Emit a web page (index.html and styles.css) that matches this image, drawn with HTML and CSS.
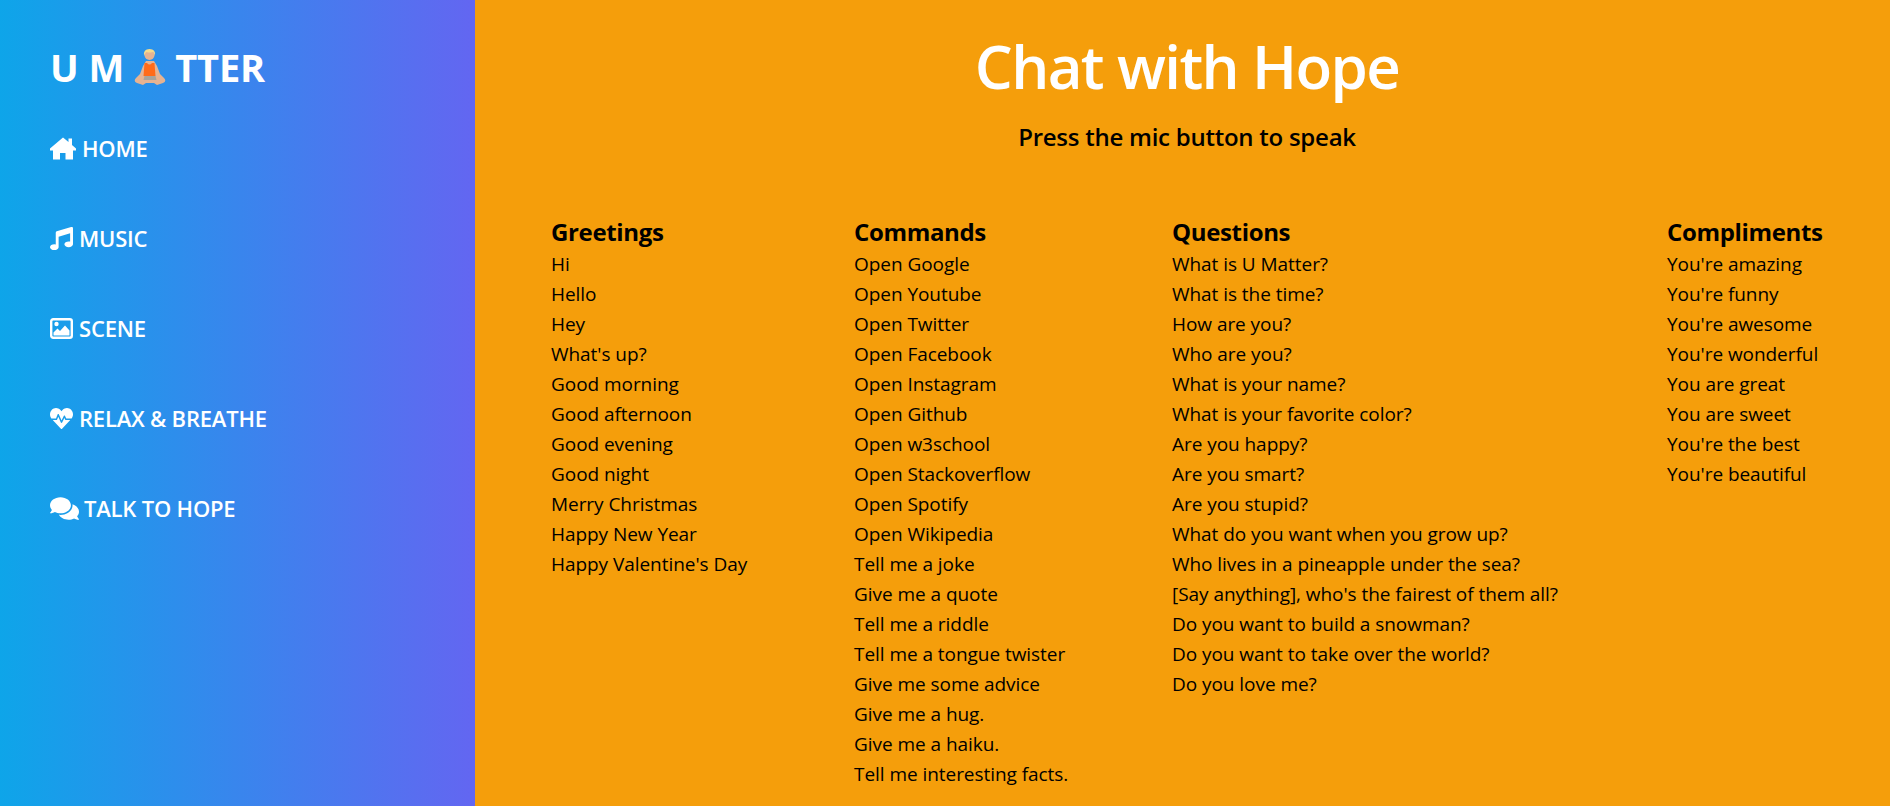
FILE: index.html
```html
<!DOCTYPE html>
<html lang="en">
<head>
  <meta charset="UTF-8" />
  <meta name="viewport" content="width=device-width, initial-scale=1.0"/>
  <title>U Matter - Chat with Hope</title>
  <link rel="stylesheet" href="styles.css">
</head>
<body>

  <div class="page">
    <aside class="sidebar">
      <h1 class="logo">U M<svg class="logo-emoji" viewBox="0 0 32 37"><path fill="#e6b392" d="M12 12h8l3 5 3 8 4 4q3 3-1 5l-6 2-3-2h-8l-3 2-6-2q-4-2-1-5l4-4 3-8z"/><path fill="#ff6b1a" d="M10.500 14h2.500q2.500 3 5 0h2.500l1 13h-12z"/><path fill="#a9a39b" d="M10.500 27h11l1 4h-13z"/><circle cx="15.500" cy="6" r="5" fill="#e6b392"/><path fill="#f5dc8c" d="M10 7q-1-7 5.500-7t5.500 7q-1-4-2.500-4-3 1-6 0-1.500 1-2.500 4z"/></svg>TTER</h1>
      <nav class="nav">
        <a class="nav-link" href="#"><svg class="icon icon-home" viewBox="0 0 26 22"><path d="M13 0l5.500 4.600V1h3.500v6.500l4 3.500v2h-3v9h-7.500v-6.500h-5.500V22H3v-9H0v-2z"/></svg>HOME</a>
        <a class="nav-link" href="#"><svg class="icon" viewBox="0 0 512 512"><path d="M470.38 1.51L150.41 96A32 32 0 0 0 128 126.51v261.41A139 139 0 0 0 96 384c-53 0-96 28.66-96 64s43 64 96 64 96-28.66 96-64V214.32l256-75v184.61a138.4 138.4 0 0 0-32-3.93c-53 0-96 28.66-96 64s43 64 96 64 96-28.65 96-64V32a32 32 0 0 0-41.62-30.49z"/></svg>MUSIC</a>
        <a class="nav-link" href="#"><svg class="icon icon-scene" viewBox="0 0 23 21"><rect class="scene-frame" x="1.200" y="1.200" width="20.600" height="18.600" rx="2"/><circle cx="6.500" cy="6" r="2.200"/><path d="M3.500 17.500v-3l4-4 2.500 2.500 5-5.500 4.500 5v5z"/></svg>SCENE</a>
        <a class="nav-link" href="#"><svg class="icon icon-scene" viewBox="0 32 512 448" preserveAspectRatio="none"><path d="M320.2 243.8l-49.7 99.4c-6 12.1-23.4 11.7-28.9-.6l-56.9-126.3-30 71.7H60.6l182.5 186.5c7.1 7.3 18.600 7.3 25.700 0L451.400 288H342.300l-22.100-44.200zM473.700 73.900l-2.400-2.500c-51.500-52.600-135.800-52.600-187.400 0L256 100l-27.900-28.500c-51.500-52.700-135.900-52.700-187.400 0l-2.400 2.400C-10.400 123.700-12.500 203 31 256h102.400l35.900-86.200c5.400-12.900 23.600-13.200 29.400-.4l58.200 129.300 49-97.900c5.900-11.800 22.700-11.800 28.600 0l27.600 55.200H481c43.500-53 41.400-132.300-7.300-182.100z"/></svg>RELAX &amp; BREATHE</a>
        <a class="nav-link" href="#"><svg class="icon icon-talk" viewBox="0 32 576 448"><path d="M416 192c0-88.400-93.100-160-208-160S0 103.600 0 192c0 34.300 14.100 65.900 38 92-13.400 30.200-35.500 54.200-35.800 54.500-2.200 2.300-2.800 5.700-1.500 8.700S4.800 352 8 352c36.600 0 66.900-12.300 88.700-25 32.200 15.700 70.300 25 111.300 25 114.900 0 208-71.600 208-160zm122 220c23.900-26 38-57.700 38-92 0-66.900-53.500-124.200-129.300-148.100.9 6.600 1.300 13.300 1.300 20.100 0 105.900-107.700 192-240 192-10.800 0-21.300-.8-31.700-1.900C207.800 439.600 281.800 480 368 480c41 0 79.100-9.200 111.300-25 21.800 12.700 52.100 25 88.700 25 3.200 0 6.100-1.900 7.300-4.800 1.300-2.900.7-6.300-1.500-8.700-.3-.3-22.400-24.200-35.800-54.500z"/></svg>TALK TO HOPE</a>
      </nav>
    </aside>

    <main class="main">
      <h2 class="title">Chat with Hope</h2>
      <p class="subtitle">Press the mic button to speak</p>

      <div class="columns">
        <section>
          <h3>Greetings</h3>
          <ul>
            <li>Hi</li>
            <li>Hello</li>
            <li>Hey</li>
            <li>What's up?</li>
            <li>Good morning</li>
            <li>Good afternoon</li>
            <li>Good evening</li>
            <li>Good night</li>
            <li>Merry Christmas</li>
            <li>Happy New Year</li>
            <li>Happy Valentine's Day</li>
          </ul>
        </section>
        <section>
          <h3>Commands</h3>
          <ul>
            <li>Open Google</li>
            <li>Open Youtube</li>
            <li>Open Twitter</li>
            <li>Open Facebook</li>
            <li>Open Instagram</li>
            <li>Open Github</li>
            <li>Open w3school</li>
            <li>Open Stackoverflow</li>
            <li>Open Spotify</li>
            <li>Open Wikipedia</li>
            <li>Tell me a joke</li>
            <li>Give me a quote</li>
            <li>Tell me a riddle</li>
            <li>Tell me a tongue twister</li>
            <li>Give me some advice</li>
            <li>Give me a hug.</li>
            <li>Give me a haiku.</li>
            <li>Tell me interesting facts.</li>
          </ul>
        </section>
        <section>
          <h3>Questions</h3>
          <ul>
            <li>What is U Matter?</li>
            <li>What is the time?</li>
            <li>How are you?</li>
            <li>Who are you?</li>
            <li>What is your name?</li>
            <li>What is your favorite color?</li>
            <li>Are you happy?</li>
            <li>Are you smart?</li>
            <li>Are you stupid?</li>
            <li>What do you want when you grow up?</li>
            <li>Who lives in a pineapple under the sea?</li>
            <li>[Say anything], who's the fairest of them all?</li>
            <li>Do you want to build a snowman?</li>
            <li>Do you want to take over the world?</li>
            <li>Do you love me?</li>
          </ul>
        </section>
        <section>
          <h3>Compliments</h3>
          <ul>
            <li>You're amazing</li>
            <li>You're funny</li>
            <li>You're awesome</li>
            <li>You're wonderful</li>
            <li>You are great</li>
            <li>You are sweet</li>
            <li>You're the best</li>
            <li>You're beautiful</li>
          </ul>
        </section>
      </div>
    </main>
  </div>

</body>
</html>
```

FILE: styles.css
```css
body {
  margin: 0;
  font-family: "Open Sans", "Noto Sans", sans-serif;
  background-color: #f59e0b;
  color: #000;
}

.page {
  display: flex;
  min-height: 806px;
}

.sidebar {
  width: 475px;
  box-sizing: border-box;
  padding: 42px 50px;
  background: linear-gradient(to right, #0ea5e9, #6366f1);
  color: #fff;
}

.logo {
  margin: 0;
  font-size: 38px;
  line-height: 50px;
  font-weight: 700;
  letter-spacing: -0.1px;
  display: flex;
  align-items: center;
}

.logo-emoji {
  width: 32px;
  height: 37px;
  margin: 0 9px 0 10px;
}

.nav {
  margin-top: 41px;
  display: flex;
  flex-direction: column;
  gap: 60px;
}

.nav-link {
  display: flex;
  align-items: center;
  gap: 6px;
  height: 30px;
  color: #fff;
  font-size: 22px;
  font-weight: 600;
  text-decoration: none;
  letter-spacing: -0.2px;
}

.icon {
  width: 23px;
  height: 23px;
  fill: #fff;
  flex: none;
}

.icon-home {
  width: 26px;
}

.icon-scene {
  height: 21px;
}

.icon-talk {
  width: 29px;
  margin-right: -1px;
}

.scene-frame {
  fill: none;
  stroke: #fff;
  stroke-width: 2.4;
}

.main {
  flex: 1;
  padding-top: 28px;
}

.title {
  margin: 0;
  padding-left: 9px;
  text-align: center;
  font-size: 60px;
  line-height: 76px;
  font-weight: 600;
  color: #fff;
  letter-spacing: -1.6px;
}

.subtitle {
  margin: 17px 0 0;
  padding-left: 9px;
  text-align: center;
  font-size: 24px;
  line-height: 32px;
  font-weight: 600;
  letter-spacing: -0.25px;
}

.columns {
  display: grid;
  grid-template-columns: 303px 318px 495px auto;
  margin-top: 62px;
  padding-left: 76px;
}

h3 {
  margin: 0;
  font-size: 24px;
  line-height: 34px;
  font-weight: 700;
  letter-spacing: -0.35px;
}

ul {
  margin: 0;
  padding: 0;
  list-style: none;
}

li {
  font-size: 19px;
  line-height: 30px;
  letter-spacing: -0.05px;
}
```
